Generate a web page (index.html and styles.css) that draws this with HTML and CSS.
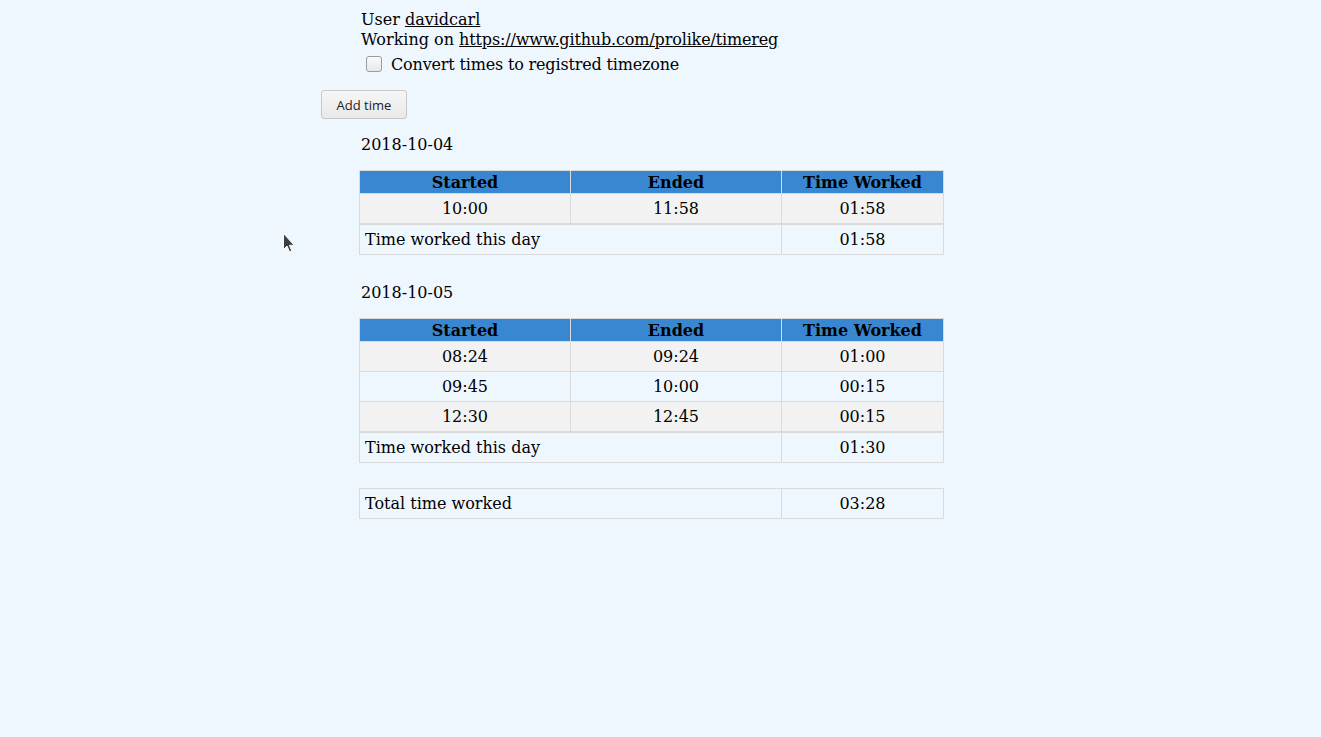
FILE: index.html
```html
<!DOCTYPE html>
<html>
<head>
<meta charset="utf-8">
<link rel="stylesheet" href="styles.css">
</head>
<body>
<div class="page">
  <div class="info">
    <div class="line">User <a href="#">davidcarl</a></div>
    <div class="line">Working on <a href="#" class="url">https://www.github.com/prolike/timereg</a></div>
    <label class="check"><input type="checkbox" class="box"> <span class="check-text">Convert times to registred timezone</span></label>
  </div>
  <button class="btn">Add time</button>

  <div class="day">
    <div class="date">2018-10-04</div>
    <table class="tbl">
      <thead>
        <tr><th class="c1">Started</th><th class="c2">Ended</th><th class="c3">Time Worked</th></tr>
      </thead>
      <tbody>
        <tr class="odd"><td>10:00</td><td>11:58</td><td>01:58</td></tr>
      </tbody>
      <tfoot>
        <tr><td colspan="2" class="label">Time worked this day</td><td>01:58</td></tr>
      </tfoot>
    </table>
  </div>

  <div class="day">
    <div class="date">2018-10-05</div>
    <table class="tbl">
      <thead>
        <tr><th class="c1">Started</th><th class="c2">Ended</th><th class="c3">Time Worked</th></tr>
      </thead>
      <tbody>
        <tr class="odd"><td>08:24</td><td>09:24</td><td>01:00</td></tr>
        <tr><td>09:45</td><td>10:00</td><td>00:15</td></tr>
        <tr class="odd"><td>12:30</td><td>12:45</td><td>00:15</td></tr>
      </tbody>
      <tfoot>
        <tr><td colspan="2" class="label">Time worked this day</td><td>01:30</td></tr>
      </tfoot>
    </table>
  </div>

  <table class="tbl total">
    <tbody>
      <tr><td class="label wide">Total time worked</td><td class="c3">03:28</td></tr>
    </tbody>
  </table>
</div>
<svg class="cursor" width="14" height="22" viewBox="0 0 14 22"><path d="M1.5 1.5 L1.5 17.5 L5 14 L7.6 20 L9.8 19 L7.4 13.3 L12.2 13.3 Z" fill="#3d3d3d" stroke="#fafafa" stroke-width="1" stroke-linejoin="round"/></svg>
</body>
</html>
```

FILE: styles.css
```css
html, body {
  margin: 0;
  padding: 0;
  background: #eff7fe;
}
body {
  font-family: "DejaVu Serif", serif;
  font-size: 16px;
  color: #000;
  position: relative;
  min-height: 737px;
}
.page {
  padding: 10px 0 0 321px;
}
.info {
  padding-left: 40px;
}
.line {
  height: 20px;
  line-height: 19px;
}
.line a {
  color: #000;
  text-decoration: underline;
}
.url {
  letter-spacing: -0.15px;
}
.check {
  display: flex;
  align-items: center;
  gap: 9px;
  height: 24px;
  margin-top: 2px;
  padding-left: 5px;
}
.check-text {
  letter-spacing: -0.17px;
}
.box {
  appearance: none;
  -webkit-appearance: none;
  width: 16px;
  height: 16px;
  margin: 0;
  border: 1px solid #9a9a9a;
  border-radius: 3px;
  background: linear-gradient(#fafafa, #e9e9e9);
  box-sizing: border-box;
}
.btn {
  display: block;
  margin-top: 14px;
  width: 86px;
  height: 29px;
  font-family: "Open Sans", sans-serif;
  font-size: 13px;
  color: #222;
  background: linear-gradient(#f6f6f6, #e9e9e9);
  border: 1px solid #c8c8c8;
  border-radius: 3px;
  padding: 0;
}
.day {
  padding-left: 38px;
  margin-top: 16px;
}
.day + .day {
  margin-top: 28px;
}
.date {
  padding-left: 2px;
  height: 19px;
  line-height: 19px;
  margin-bottom: 16px;
}
.tbl {
  border-collapse: collapse;
  width: 584px;
  table-layout: fixed;
}
.tbl th, .tbl td {
  box-sizing: border-box;
  border: 1px solid #dadada;
  text-align: center;
  line-height: 19px;
}
.tbl th {
  background: #3a87d1;
  font-weight: bold;
  padding: 2px 4px 1px;
}
.tbl td {
  padding: 5px 5px 5px;
}
.c1, .c2 {
  width: 211px;
}
.c3 {
  width: 162px;
}
.tbl tbody tr.odd td {
  background: #f2f2f2;
}
.tbl tfoot tr td {
  border-top: 2px solid #dadada;
}
.tbl td.label {
  text-align: left;
}
.total {
  margin-left: 38px;
  margin-top: 25px;
}
.total .wide {
  width: 422px;
}
.cursor {
  position: absolute;
  left: 282px;
  top: 232px;
}
```
